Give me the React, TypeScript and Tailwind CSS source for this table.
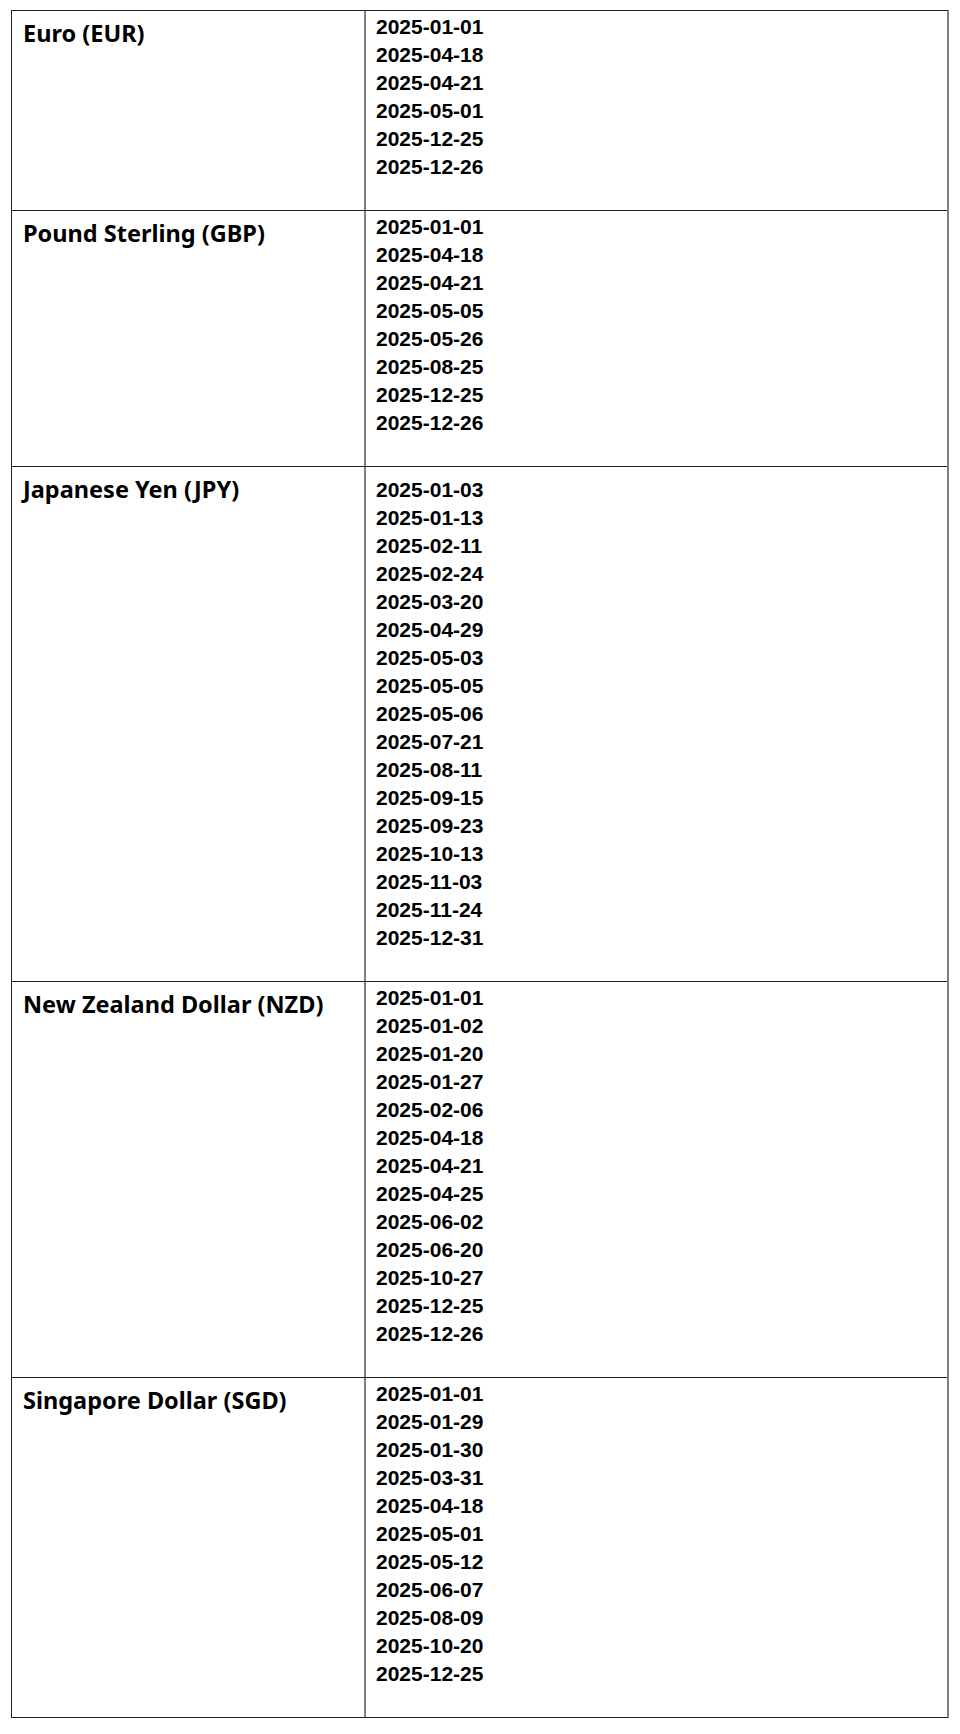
import React from "react";

const rows: { name: string; dates: string[]; extra?: boolean }[] = [
  { name: "Euro (EUR)", dates: ["2025-01-01", "2025-04-18", "2025-04-21", "2025-05-01", "2025-12-25", "2025-12-26"] },
  { name: "Pound Sterling (GBP)", dates: ["2025-01-01", "2025-04-18", "2025-04-21", "2025-05-05", "2025-05-26", "2025-08-25", "2025-12-25", "2025-12-26"] },
  {
    name: "Japanese Yen (JPY)",
    extra: true,
    dates: ["2025-01-03", "2025-01-13", "2025-02-11", "2025-02-24", "2025-03-20", "2025-04-29", "2025-05-03", "2025-05-05", "2025-05-06", "2025-07-21", "2025-08-11", "2025-09-15", "2025-09-23", "2025-10-13", "2025-11-03", "2025-11-24", "2025-12-31"],
  },
  { name: "New Zealand Dollar (NZD)", dates: ["2025-01-01", "2025-01-02", "2025-01-20", "2025-01-27", "2025-02-06", "2025-04-18", "2025-04-21", "2025-04-25", "2025-06-02", "2025-06-20", "2025-10-27", "2025-12-25", "2025-12-26"] },
  { name: "Singapore Dollar (SGD)", dates: ["2025-01-01", "2025-01-29", "2025-01-30", "2025-03-31", "2025-04-18", "2025-05-01", "2025-05-12", "2025-06-07", "2025-08-09", "2025-10-20", "2025-12-25"] },
];

export default function App() {
  return (
    <div className="bg-white min-h-[1734px] pl-[11px] pr-[11px] pt-[10px]">
      <div className="border-t border-l border-b border-[#222] border-r-2 border-r-[#808080]">
        {rows.map((r, i) => (
          <div
            key={r.name}
            className={`grid grid-cols-[354px_1fr] ${i < rows.length - 1 ? "border-b border-[#222]" : ""}`}
          >
            <div className="border-r-2 border-[#808080] pl-[11px] pt-[6px] text-[23.5px] leading-[32px] font-bold text-black [font-family:'Noto_Sans','Noto_Sans_CJK_KR',sans-serif]">
              {r.name}
            </div>
            <div
              className={`pl-[10px] ${r.extra ? "pt-[9px] pb-[29px]" : "pt-[2px] pb-[29px]"} text-[21px] leading-[28px] font-bold text-black [font-family:'Liberation_Sans',Arial,sans-serif]`}
            >
              {r.dates.map((d, j) => (
                <div key={j}>{d}</div>
              ))}
            </div>
          </div>
        ))}
      </div>
    </div>
  );
}
